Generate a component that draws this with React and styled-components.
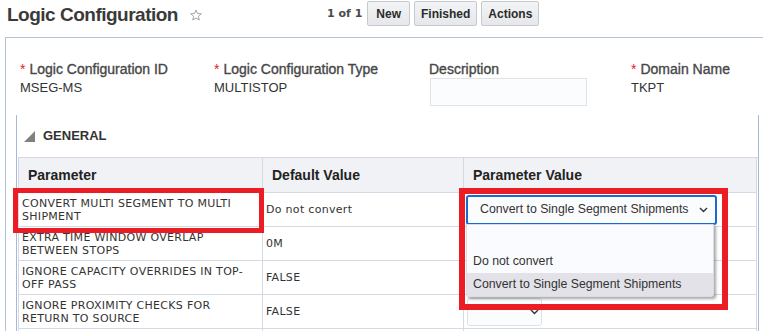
import styled, { createGlobalStyle } from "styled-components";

const GlobalStyle = createGlobalStyle`
  html, body {
    margin: 0;
    padding: 0;
    background: #ffffff;
    font-family: "Liberation Sans", Arial, sans-serif;
  }
`;

const Page = styled.div`
  width: 763px;
  height: 331px;
  overflow: hidden;
`;

const TopBar = styled.header`
  display: flex;
  align-items: flex-start;
  height: 37px;
`;

const Title = styled.h1`
  margin: 4px 0 0 7px;
  font-size: 19px;
  line-height: 22px;
  font-weight: bold;
  letter-spacing: -0.5px;
  color: #3a3a3a;
  white-space: nowrap;
`;

const Star = styled.svg`
  margin: 9px 0 0 12px;
  flex: none;
`;

const Toolbar = styled.div`
  display: flex;
  align-items: center;
  gap: 4px;
  height: 25px;
  margin: 1px 0 0 125px;
`;

const Pager = styled.span`
  font-family: "DejaVu Sans", Verdana, sans-serif;
  font-size: 11px;
  font-weight: bold;
  color: #4a4a4a;
  margin-right: 1px;
`;

const Button = styled.button`
  height: 25px;
  padding: 0 ${(p) => p.$pad || 7}px;
  border: 1px solid #c6cace;
  border-radius: 2px;
  background: linear-gradient(#f3f4f5, #e5e7ea);
  font-family: "Liberation Sans", Arial, sans-serif;
  font-size: 12px;
  font-weight: bold;
  color: #2b2b2b;
`;

const Panel = styled.section`
  margin-left: 5px;
  border-top: 1px solid #b5c3da;
  border-left: 1px solid #b5c3da;
  padding-top: 23px;
`;

const Fields = styled.div`
  display: grid;
  grid-template-columns: 194px 215px 202px 1fr;
  padding-left: 14px;
`;

const Field = styled.div`
  display: flex;
  flex-direction: column;
`;

const Label = styled.div`
  font-size: 14px;
  line-height: 17px;
  color: #474747;
  -webkit-text-stroke: 0.35px #474747;
  white-space: nowrap;
`;

const Req = styled.span`
  color: #e2231a;
  -webkit-text-stroke: 0;
  margin-right: 4px;
`;

const Value = styled.div`
  margin-top: 2px;
  font-size: 13px;
  line-height: 16px;
  color: #333;
`;

const TextInput = styled.div`
  margin-left: 1px;
  width: 157px;
  height: 28px;
  box-sizing: border-box;
  border: 1px solid #dfe3e8;
  background: #fbfcfd;
`;

const Section = styled.div`
  margin: 9px 0 0 10px;
  width: 743px;
  box-sizing: border-box;
  border-left: 1px solid #a9b7db;
  border-right: 1px solid #a9b7db;
`;

const SectionHead = styled.div`
  display: flex;
  align-items: flex-start;
  height: 42px;
  box-sizing: border-box;
  padding: 13px 0 0 7px;
`;

const Twisty = styled.svg`
  margin: 3px 8px 0 0;
`;

const SectionTitle = styled.span`
  font-size: 13px;
  line-height: 16px;
  font-weight: bold;
  color: #333;
`;

const Grid = styled.div`
  position: relative;
  margin-left: 1px;
  display: grid;
  grid-template-columns: 244px 201px 293px;
  border-top: 1px solid #d3dae4;
  border-left: 1px solid #d3dae4;
`;

const HeadCell = styled.div`
  height: 35px;
  box-sizing: border-box;
  display: flex;
  align-items: center;
  padding-left: 9px;
  background: #f1f2f6;
  border-right: 1px solid #d3dae4;
  border-bottom: 1px solid #d3dae4;
  font-size: 14px;
  font-weight: bold;
  color: #222;
`;

const Cell = styled.div`
  position: relative;
  height: 34px;
  box-sizing: border-box;
  display: flex;
  align-items: center;
  padding: 0 6px 0 3px;
  border-right: 1px solid #d3dae4;
  border-bottom: 1px solid #d3dae4;
  font-family: "DejaVu Sans", Verdana, sans-serif;
  font-size: 11px;
  line-height: 13px;
  letter-spacing: 0.3px;
  color: #333;
`;

const Select = styled.div`
  display: flex;
  align-items: center;
  justify-content: ${(p) => (p.$active ? "space-between" : "flex-end")};
  box-sizing: border-box;
  flex: none;
  width: ${(p) => p.$w}px;
  height: ${(p) => (p.$active ? 30 : 28)}px;
  margin-left: ${(p) => (p.$active ? -1 : 0)}px;
  padding: 0 ${(p) => (p.$active ? 7 : 2)}px 0 12px;
  border: ${(p) => (p.$active ? "2px solid #1b69d3" : "1px solid #dde2ea")};
  border-radius: 3px;
  background: #fbfcfe;
  font-family: "Liberation Sans", Arial, sans-serif;
  font-size: 12.3px;
  letter-spacing: 0;
  color: #333;
  white-space: nowrap;
`;

const Menu = styled.div`
  position: absolute;
  z-index: 3;
  left: 2px;
  top: 31px;
  width: 248px;
  box-sizing: border-box;
  padding-top: 25px;
  border: 1px solid #dadde3;
  border-radius: 0 0 3px 3px;
  background: #fafbfe;
  box-shadow: 2px 2px 3px rgba(0, 0, 0, 0.35);
`;

const Option = styled.div`
  height: 23px;
  display: flex;
  align-items: center;
  padding-left: 6px;
  font-family: "Liberation Sans", Arial, sans-serif;
  font-size: 12.3px;
  letter-spacing: 0;
  color: #333;
  white-space: nowrap;
  background: ${(p) => (p.$hover ? "#e2e2e8" : "transparent")};
`;

const Callout = styled.div`
  position: absolute;
  z-index: 4;
  left: ${(p) => p.$x}px;
  top: ${(p) => p.$y}px;
  width: ${(p) => p.$w}px;
  height: ${(p) => p.$h}px;
  box-sizing: border-box;
  border: ${(p) => p.$b}px solid #ec1c24;
  pointer-events: none;
`;

const Chevron = () => (
  <svg width="9" height="6" viewBox="0 0 9 6">
    <polyline points="1,1 4.5,4.5 8,1" fill="none" stroke="#333" strokeWidth="1.4" />
  </svg>
);

const rows = [
  ["CONVERT MULTI SEGMENT TO MULTI SHIPMENT", "Do not convert", "open"],
  ["EXTRA TIME WINDOW OVERLAP BETWEEN STOPS", "0M", null],
  ["IGNORE CAPACITY OVERRIDES IN TOP-OFF PASS", "FALSE", null],
  ["IGNORE PROXIMITY CHECKS FOR RETURN TO SOURCE", "FALSE", "small"],
  ["", "", null],
];

export default function App() {
  return (
    <Page>
      <GlobalStyle />
      <TopBar>
        <Title>Logic Configuration</Title>
        <Star width="12" height="12" viewBox="0 0 24 24">
          <polygon
            points="12,2 14.9,8.9 22.5,9.6 16.8,14.6 18.5,22 12,18.1 5.5,22 7.2,14.6 1.5,9.6 9.1,8.9"
            fill="none"
            stroke="#9a9a9a"
            strokeWidth="1.8"
            strokeLinejoin="round"
          />
        </Star>
        <Toolbar>
          <Pager>1 of 1</Pager>
          <Button $pad={8}>New</Button>
          <Button $pad={6}>Finished</Button>
          <Button $pad={6}>Actions</Button>
        </Toolbar>
      </TopBar>

      <Panel>
        <Fields>
          <Field>
            <Label>
              <Req>*</Req>Logic Configuration ID
            </Label>
            <Value>MSEG-MS</Value>
          </Field>
          <Field>
            <Label>
              <Req>*</Req>Logic Configuration Type
            </Label>
            <Value>MULTISTOP</Value>
          </Field>
          <Field>
            <Label>Description</Label>
            <TextInput />
          </Field>
          <Field>
            <Label>
              <Req>*</Req>Domain Name
            </Label>
            <Value>TKPT</Value>
          </Field>
        </Fields>

        <Section>
          <SectionHead>
            <Twisty width="11" height="11" viewBox="0 0 11 11">
              <polygon points="11,0 11,11 0,11" fill="#808080" />
            </Twisty>
            <SectionTitle>GENERAL</SectionTitle>
          </SectionHead>

          <Grid>
            <HeadCell>Parameter</HeadCell>
            <HeadCell>Default Value</HeadCell>
            <HeadCell>Parameter Value</HeadCell>
            {rows.map(([name, def, kind], i) => (
              <>
                <Cell key={`n${i}`}>{name}</Cell>
                <Cell key={`d${i}`}>{def}</Cell>
                <Cell key={`v${i}`}>
                  {kind === "open" && (
                    <>
                      <Select $w={251} $active>
                        Convert to Single Segment Shipments
                        <Chevron />
                      </Select>
                      <Menu>
                        <Option>Do not convert</Option>
                        <Option $hover>Convert to Single Segment Shipments</Option>
                      </Menu>
                    </>
                  )}
                  {kind === "small" && (
                    <Select $w={75}>
                      <Chevron />
                    </Select>
                  )}
                </Cell>
              </>
            ))}
            <Callout $x={-6} $y={30} $w={251} $h={45} $b={5} />
            <Callout $x={440} $y={30} $w={269} $h={122} $b={6} />
          </Grid>
        </Section>
      </Panel>
    </Page>
  );
}
